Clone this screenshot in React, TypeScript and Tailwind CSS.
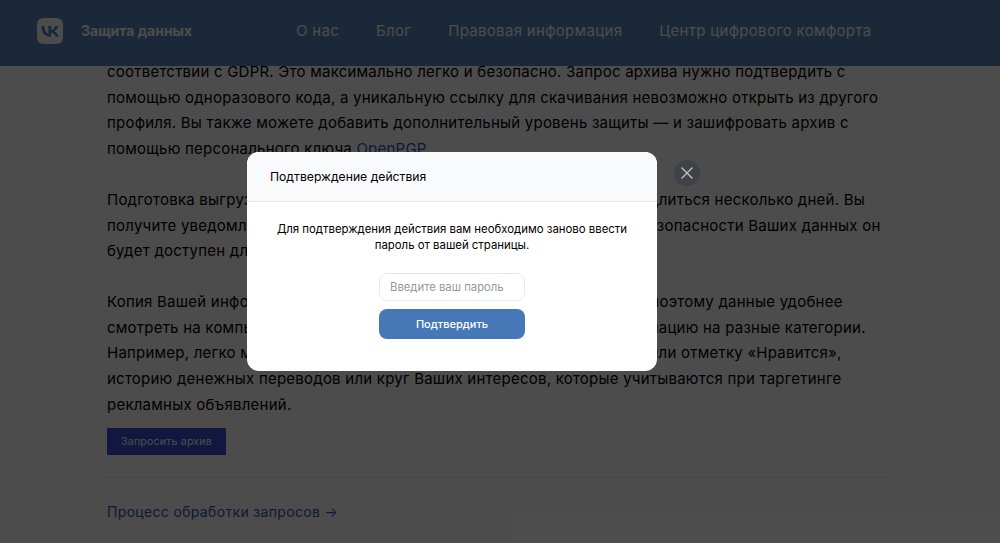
import React from 'react';
import { SiVk } from 'react-icons/si';
import { X } from 'lucide-react';

const NAV = ['О нас', 'Блог', 'Правовая информация', 'Центр цифрового комфорта'];

const Header: React.FC = () => (
  <header className="absolute top-0 left-0 right-0 z-10 h-[66px] bg-[#5a87c2] flex items-center pl-[37px] pb-[4px]">
    <SiVk size={26} className="text-white" />
    <span className="ml-[18px] mb-[2px] w-[215px] text-[14px] font-bold text-white">Защита данных</span>
    <nav className="flex gap-[37px] text-[15px] tracking-[0.31px] text-white">
      {NAV.map((item) => (
        <span key={item}>{item}</span>
      ))}
    </nav>
  </header>
);

const Article: React.FC = () => (
  <main className="pt-[59px] pl-[107px] text-[15px] leading-[25.7px] tracking-[0.23px] whitespace-nowrap text-black">
    <p>
      соответствии с GDPR. Это максимально легко и безопасно. Запрос архива нужно подтвердить с<br />
      помощью одноразового кода, а уникальную ссылку для скачивания невозможно открыть из другого<br />
      профиля. Вы также можете добавить дополнительный уровень защиты — и зашифровать архив с<br />
      помощью персонального ключа <span className="text-[#3a50b8]">OpenPGP</span>.
    </p>
    <p className="mt-[25px]">
      Подготовка выгрузки занимает немало времени — процесс может продлиться несколько дней. Вы<br />
      получите уведомление о готовности архива на вашу почту, и в целях безопасности Ваших данных он<br />
      будет доступен для скачивания в течение нескольких дней.
    </p>
    <p className="mt-[25px]">
      Копия Вашей информации имеет большое количество файлов и папок, поэтому данные удобнее<br />
      смотреть на компьютере. Архив тоже позволяет разделить всю информацию на разные категории.<br />
      Например, легко можно найти любой комментарий, пост, фотографию или отметку «Нравится»,<br />
      историю денежных переводов или круг Ваших интересов, которые учитываются при таргетинге<br />
      рекламных объявлений.
    </p>
    <button className="mt-[11px] block h-[27px] w-[119px] bg-[#3f4dd8] text-[10.5px] leading-[27px] text-white">
      Запросить архив
    </button>
    <div className="mt-[22px] h-px w-[783px] bg-[#e7e8ec]" />
    <a className="mt-[21px] block text-[14px] tracking-[0.33px] text-[#3a50b8]">Процесс обработки запросов →</a>
  </main>
);

const Modal: React.FC = () => (
  <div className="absolute inset-0 z-20 bg-black/70 pl-[247px] pt-[152px]">
    <div className="relative w-[410px] h-[219px] rounded-[12px] bg-white text-black">
      <div className="h-[50px] rounded-t-[12px] bg-[#f9fafc] border-b border-[#e7e8ec] pl-[23px] text-[12.2px] leading-[49px]">
        Подтверждение действия
      </div>
      <div className="flex flex-col items-center pt-[19px]">
        <p className="w-[360px] text-center text-[11.4px] leading-[16px]">
          Для подтверждения действия вам необходимо заново ввести пароль от вашей страницы.
        </p>
        <input
          placeholder="Введите ваш пароль"
          className="mt-[20px] h-[28px] w-[146px] rounded-[8px] border border-[#e7e8ec] pl-[10px] text-[11.3px] placeholder:text-[#929aa5] outline-none"
        />
        <button className="mt-[8px] h-[30px] w-[146px] rounded-[8px] bg-[#4678b8] text-[11px] font-medium text-white">
          Подтвердить
        </button>
      </div>
      <button className="absolute left-[427px] top-[8px] flex h-[26px] w-[26px] items-center justify-center rounded-full bg-[#3f4347] text-[#b9bbbd]">
        <X size={20} strokeWidth={1.7} />
      </button>
    </div>
  </div>
);

export default function App() {
  return (
    <div className="relative h-[543px] w-[1000px] overflow-hidden bg-white font-['Inter',sans-serif]">
      <Header />
      <Article />
      <Modal />
    </div>
  );
}
